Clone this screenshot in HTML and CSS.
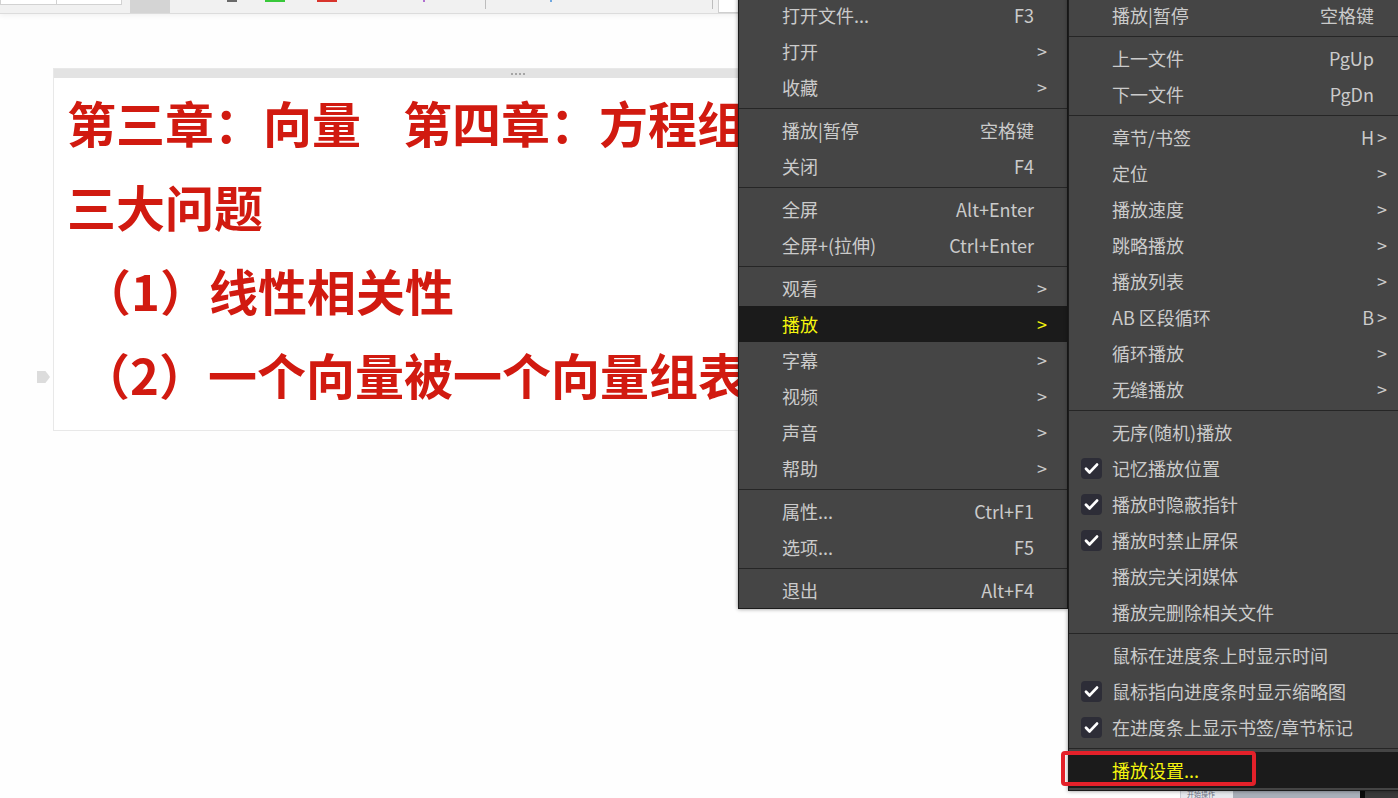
FILE: index.html
```html
<!DOCTYPE html>
<html lang="zh-CN">
<head>
<meta charset="utf-8">
<title>播放菜单</title>
<link rel="stylesheet" href="styles.css">
</head>
<body>
<div class="page">
  <div class="toolbar">
    <div class="tb-left"><div class="tb-field"><span class="tb-cell"></span></div></div>
    <div class="tb-gray"></div>
    <div class="tb-main">
      <span class="mk mk-dark"></span>
      <span class="mk mk-green"></span>
      <span class="mk mk-red"></span>
      <span class="mk mk-purple"></span>
      <span class="mk mk-sep1"></span>
      <span class="mk mk-blue"></span>
      <span class="mk mk-sep2"></span>
    </div>
    <div class="tb-white"></div>
  </div>

  <div class="stage">
    <div class="marker"></div>
    <div class="slide">
      <div class="slide-bar"><i></i><i></i><i></i><i></i></div>
      <div class="slide-body">
        <p class="ln">第三章：向量<span class="ch4">第四章：方程组</span></p>
        <p class="ln">三大问题</p>
        <p class="ln sub">（1）线性相关性</p>
        <p class="ln sub2">（2）一个向量被一个向量组表示</p>
      </div>
    </div>
  </div>

  <div class="bottom-strip">
    <span class="bs-a">开始操作</span>
    <span class="bs-b"></span>
    <span class="bs-c"></span>
    <span class="bs-d"></span>
  </div>
</div>

<div class="menu main-menu">
  <div class="item"><span class="chk"></span><span class="label">打开文件...</span><span class="key">F3</span><span class="arrow"></span></div>
  <div class="item"><span class="chk"></span><span class="label">打开</span><span class="key"></span><span class="arrow">&gt;</span></div>
  <div class="item"><span class="chk"></span><span class="label">收藏</span><span class="key"></span><span class="arrow">&gt;</span></div>
  <div class="sep"></div>
  <div class="item"><span class="chk"></span><span class="label">播放|暂停</span><span class="key">空格键</span><span class="arrow"></span></div>
  <div class="item"><span class="chk"></span><span class="label">关闭</span><span class="key">F4</span><span class="arrow"></span></div>
  <div class="sep"></div>
  <div class="item"><span class="chk"></span><span class="label">全屏</span><span class="key">Alt+Enter</span><span class="arrow"></span></div>
  <div class="item"><span class="chk"></span><span class="label">全屏+(拉伸)</span><span class="key">Ctrl+Enter</span><span class="arrow"></span></div>
  <div class="sep"></div>
  <div class="item"><span class="chk"></span><span class="label">观看</span><span class="key"></span><span class="arrow">&gt;</span></div>
  <div class="item active"><span class="chk"></span><span class="label">播放</span><span class="key"></span><span class="arrow">&gt;</span></div>
  <div class="item"><span class="chk"></span><span class="label">字幕</span><span class="key"></span><span class="arrow">&gt;</span></div>
  <div class="item"><span class="chk"></span><span class="label">视频</span><span class="key"></span><span class="arrow">&gt;</span></div>
  <div class="item"><span class="chk"></span><span class="label">声音</span><span class="key"></span><span class="arrow">&gt;</span></div>
  <div class="item"><span class="chk"></span><span class="label">帮助</span><span class="key"></span><span class="arrow">&gt;</span></div>
  <div class="sep"></div>
  <div class="item"><span class="chk"></span><span class="label">属性...</span><span class="key">Ctrl+F1</span><span class="arrow"></span></div>
  <div class="item"><span class="chk"></span><span class="label">选项...</span><span class="key">F5</span><span class="arrow"></span></div>
  <div class="sep"></div>
  <div class="item"><span class="chk"></span><span class="label">退出</span><span class="key">Alt+F4</span><span class="arrow"></span></div>
</div>

<div class="menu sub-menu">
  <div class="item"><span class="chk"></span><span class="label">播放|暂停</span><span class="key">空格键</span><span class="arrow"></span></div>
  <div class="sep"></div>
  <div class="item"><span class="chk"></span><span class="label">上一文件</span><span class="key">PgUp</span><span class="arrow"></span></div>
  <div class="item"><span class="chk"></span><span class="label">下一文件</span><span class="key">PgDn</span><span class="arrow"></span></div>
  <div class="sep"></div>
  <div class="item"><span class="chk"></span><span class="label">章节/书签</span><span class="key">H</span><span class="arrow">&gt;</span></div>
  <div class="item"><span class="chk"></span><span class="label">定位</span><span class="key"></span><span class="arrow">&gt;</span></div>
  <div class="item"><span class="chk"></span><span class="label">播放速度</span><span class="key"></span><span class="arrow">&gt;</span></div>
  <div class="item"><span class="chk"></span><span class="label">跳略播放</span><span class="key"></span><span class="arrow">&gt;</span></div>
  <div class="item"><span class="chk"></span><span class="label">播放列表</span><span class="key"></span><span class="arrow">&gt;</span></div>
  <div class="item"><span class="chk"></span><span class="label">AB 区段循环</span><span class="key">B</span><span class="arrow">&gt;</span></div>
  <div class="item"><span class="chk"></span><span class="label">循环播放</span><span class="key"></span><span class="arrow">&gt;</span></div>
  <div class="item"><span class="chk"></span><span class="label">无缝播放</span><span class="key"></span><span class="arrow">&gt;</span></div>
  <div class="sep"></div>
  <div class="item"><span class="chk"></span><span class="label">无序(随机)播放</span><span class="key"></span><span class="arrow"></span></div>
  <div class="item"><span class="chk on"><svg viewBox="0 0 21 21"><path d="M5 10.8 L8.6 14.4 L16 6.6"/></svg></span><span class="label">记忆播放位置</span><span class="key"></span><span class="arrow"></span></div>
  <div class="item"><span class="chk on"><svg viewBox="0 0 21 21"><path d="M5 10.8 L8.6 14.4 L16 6.6"/></svg></span><span class="label">播放时隐蔽指针</span><span class="key"></span><span class="arrow"></span></div>
  <div class="item"><span class="chk on"><svg viewBox="0 0 21 21"><path d="M5 10.8 L8.6 14.4 L16 6.6"/></svg></span><span class="label">播放时禁止屏保</span><span class="key"></span><span class="arrow"></span></div>
  <div class="item"><span class="chk"></span><span class="label">播放完关闭媒体</span><span class="key"></span><span class="arrow"></span></div>
  <div class="item"><span class="chk"></span><span class="label">播放完删除相关文件</span><span class="key"></span><span class="arrow"></span></div>
  <div class="sep"></div>
  <div class="item"><span class="chk"></span><span class="label">鼠标在进度条上时显示时间</span><span class="key"></span><span class="arrow"></span></div>
  <div class="item"><span class="chk on"><svg viewBox="0 0 21 21"><path d="M5 10.8 L8.6 14.4 L16 6.6"/></svg></span><span class="label">鼠标指向进度条时显示缩略图</span><span class="key"></span><span class="arrow"></span></div>
  <div class="item"><span class="chk on"><svg viewBox="0 0 21 21"><path d="M5 10.8 L8.6 14.4 L16 6.6"/></svg></span><span class="label">在进度条上显示书签/章节标记</span><span class="key"></span><span class="arrow"></span></div>
  <div class="sep"></div>
  <div class="item active flagged"><span class="chk"></span><span class="label">播放设置...</span><span class="key"></span><span class="arrow"></span><span class="flag"></span></div>
</div>
</body>
</html>
```

FILE: styles.css
```css
* { box-sizing: border-box; }

html, body {
  margin: 0;
  padding: 0;
}

body {
  width: 1398px;
  height: 798px;
  overflow: hidden;
  background: #fefefe;
  font-family: "Noto Sans CJK SC", "Noto Sans", sans-serif;
  position: relative;
}

.page {
  display: flex;
  flex-direction: column;
  height: 798px;
}

/* ---------- top toolbar strip ---------- */
.toolbar {
  flex: none;
  display: flex;
  height: 14px;
  background: #f1f1f1;
  border-bottom: 1px solid #dcdcdc;
  box-shadow: 0 2px 5px rgba(0, 0, 0, 0.05);
}

.tb-left { width: 130px; flex: none; }

.tb-field {
  width: 122px;
  height: 5px;
  background: #fff;
  border: 1px solid #d2d2d2;
  border-top: none;
  display: flex;
}

.tb-cell {
  width: 56px;
  border-right: 1px solid #d2d2d2;
}

.tb-gray {
  width: 40px;
  flex: none;
  background: #d4d4d4;
}

.tb-main {
  width: 548px;
  flex: none;
  display: flex;
  align-items: flex-start;
}

.mk { display: block; height: 2px; flex: none; }
.mk-dark { margin-left: 57px; width: 10px; background: #6a6a6a; }
.mk-green { margin-left: 28px; width: 20px; background: #38c83a; }
.mk-red { margin-left: 32px; width: 20px; background: #d8342c; }
.mk-purple { margin-left: 86px; width: 2px; background: #b070d0; }
.mk-sep1 { margin-left: 60px; width: 1px; height: 9px; background: #bdbdbd; }
.mk-blue { margin-left: 64px; width: 2px; background: #70a8e0; }
.mk-sep2 { margin-left: 160px; width: 1px; height: 9px; background: #bdbdbd; }

.tb-white {
  width: 22px;
  flex: none;
  height: 13px;
  background: #fff;
  border-left: 1px solid #cfcfcf;
  border-bottom: 1px solid #cfcfcf;
}

/* ---------- slide ---------- */
.stage {
  flex: none;
  display: flex;
  margin-top: 54px;
  margin-left: 37px;
}

.marker {
  flex: none;
  width: 13px;
  height: 12px;
  margin-top: 303px;
  margin-right: 3px;
  background: #dcdcdc;
  clip-path: polygon(0 0, 65% 0, 100% 50%, 65% 100%, 0 100%);
}

.slide {
  flex: none;
  width: 1000px;
  background: #fff;
  border: 1px solid #e8e8e8;
}

.slide-bar {
  height: 9px;
  background: #e3e3e3;
  display: flex;
  align-items: center;
  gap: 2px;
  padding-left: 457px;
}

.slide-bar i {
  display: block;
  width: 2px;
  height: 2px;
  background: #a5a5a5;
}

.slide-body {
  padding: 2px 0 14px 13px;
}

.ln {
  margin: 0;
  font-size: 49px;
  line-height: 84px;
  font-weight: 700;
  color: #d11a10;
  white-space: nowrap;
}

.ln .ch4 { margin-left: 42px; }

.ln.sub { padding-left: 15px; }
.ln.sub2 { padding-left: 14px; }

/* ---------- bottom strip (under the submenu) ---------- */
.bottom-strip {
  margin-top: auto;
  margin-left: 1180px;
  height: 8px;
  display: flex;
  overflow: hidden;
}

.bs-a {
  width: 53px;
  background: #e6e9ee;
  border-left: 1px solid #c8ccd4;
  font-size: 7px;
  line-height: 8px;
  color: #6a7080;
  padding-left: 6px;
  overflow: hidden;
  white-space: nowrap;
}

.bs-b { width: 127px; background: #a9afb9; }
.bs-c { width: 5px; background: #0c0c0c; }
.bs-d { flex: 1; background: #3a3a3a; }

/* ---------- context menus ---------- */
.menu {
  position: absolute;
  top: -4px;
  background: #454545;
  border: 1px solid #1c1c1c;
  box-shadow: 0 0 4px rgba(0, 0, 0, 0.45);
  color: #cbcbcb;
  font-size: 18px;
}

.main-menu {
  left: 738px;
  width: 330px;
}

.sub-menu {
  left: 1068px;
  width: 340px;
  padding-bottom: 2px;
}

.item {
  display: flex;
  align-items: center;
  height: 36px;
  padding-left: 12px;
  padding-right: 20px;
  white-space: nowrap;
  line-height: 36px;
}

.item.active {
  background: #1b1b1b;
  color: #f4f40e;
}

.chk {
  flex: none;
  width: 21px;
  height: 21px;
  margin-right: 10px;
}

.chk.on {
  background: #2d2d37;
  border-radius: 4px;
  display: flex;
}

.chk svg {
  width: 21px;
  height: 21px;
}

.chk svg path {
  fill: none;
  stroke: #ffffff;
  stroke-width: 2.8;
  stroke-linecap: round;
  stroke-linejoin: round;
}

.label { flex: 1; }

.key { flex: none; }

.arrow {
  flex: none;
  width: 13px;
  text-align: right;
}

.sep {
  height: 7px;
  display: flex;
  align-items: center;
}

.sep::before {
  content: "";
  flex: 1;
  height: 1px;
  background: #262626;
}

/* red annotation frame around the highlighted entry */
.item.flagged { position: relative; }

.flag {
  position: absolute;
  left: -8px;
  top: -1px;
  width: 195px;
  height: 35px;
  border: 4px solid #e4212a;
  border-radius: 4px;
}
```
